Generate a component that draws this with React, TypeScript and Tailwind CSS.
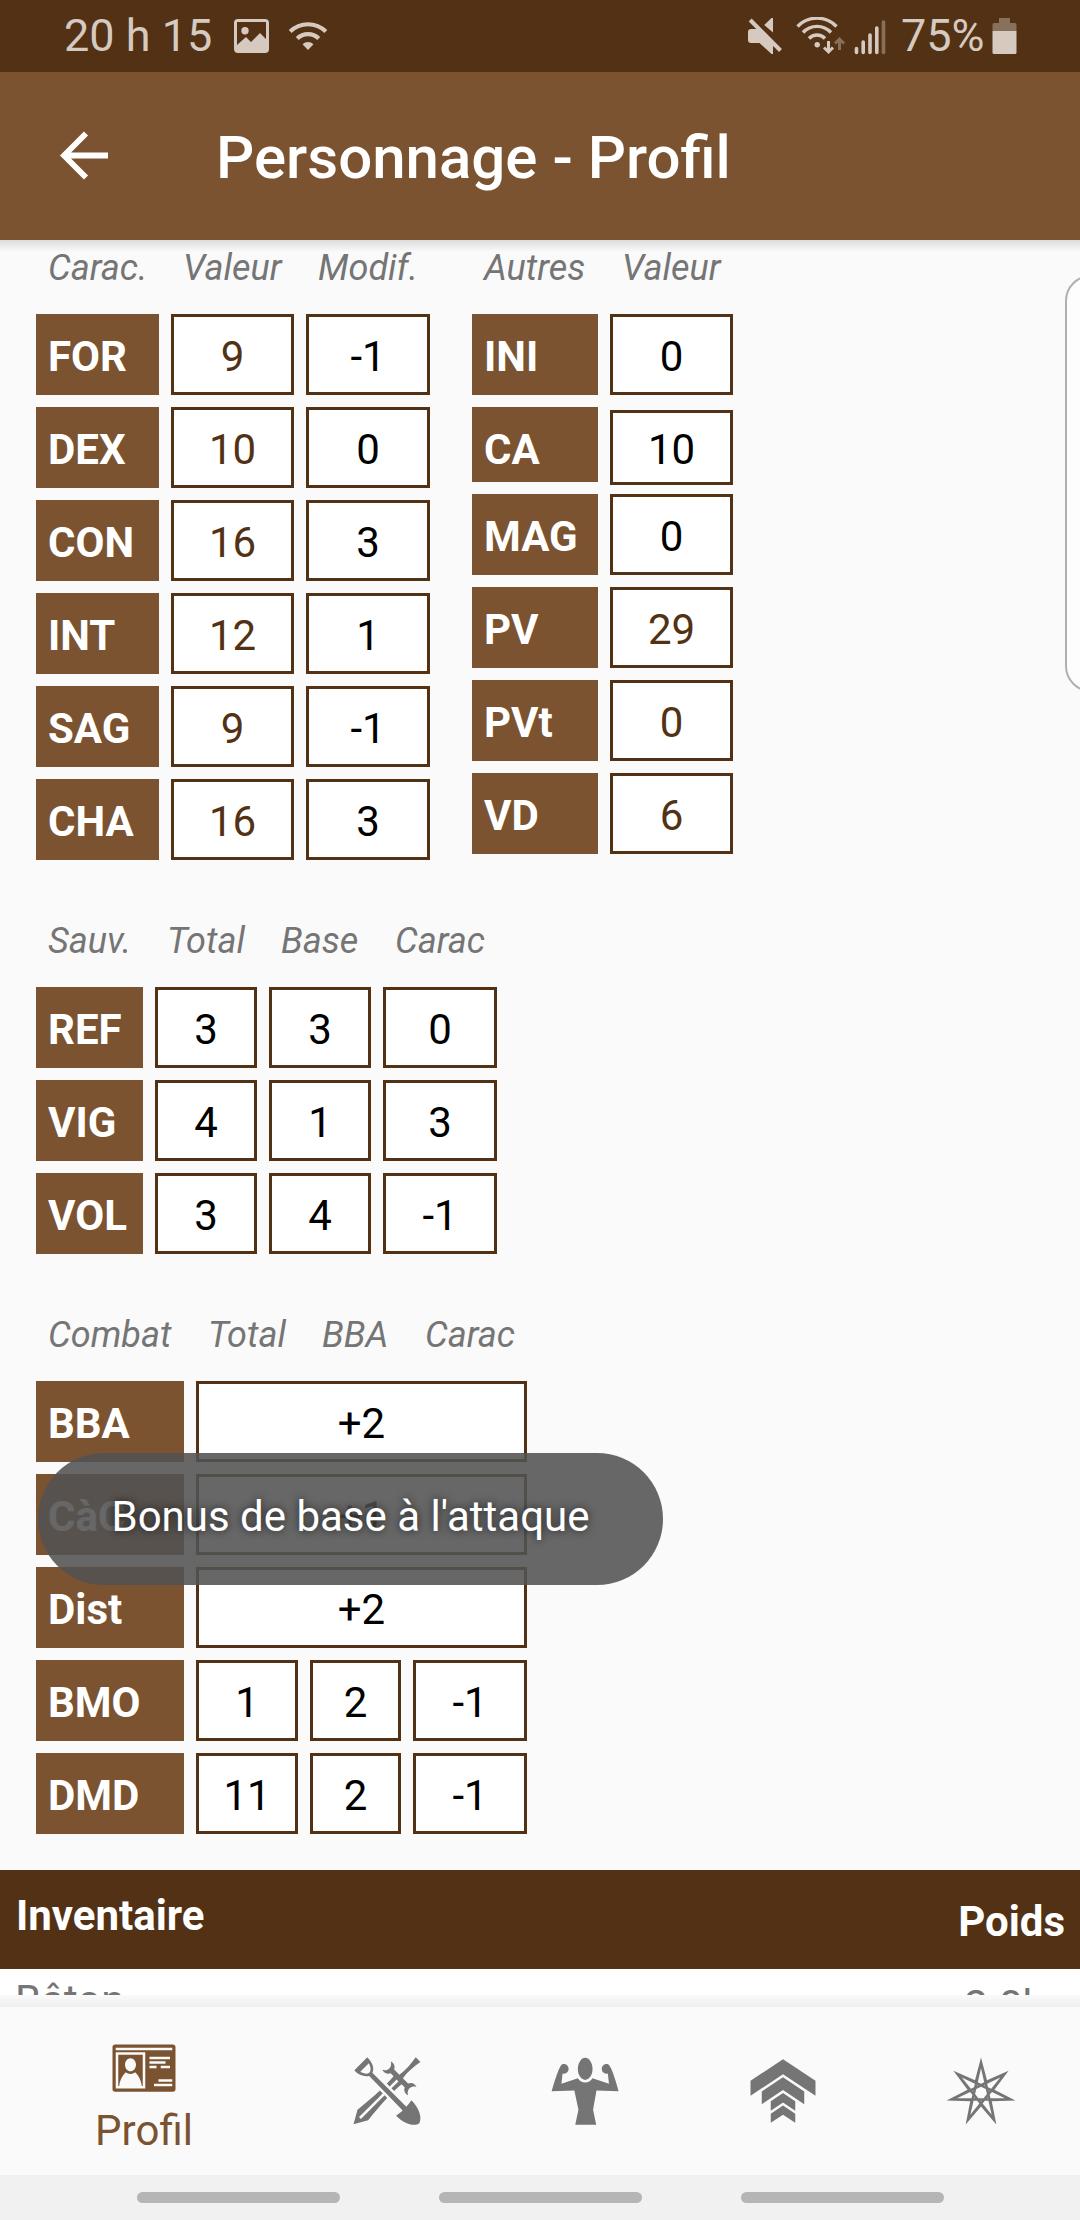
import { Fragment } from "react";
import type { ReactNode } from "react";
import { GiHeptagram, GiIdCard, GiStrong, GiSwordSpade, GiUpgrade } from "react-icons/gi";

function Label({ children, className = "h-[81px]" }: { children: ReactNode; className?: string }) {
  return (
    <div className={`bg-[#7b5330] pl-3 pt-[18px] text-[42px] leading-[49px] font-bold text-white ${className}`}>
      {children}
    </div>
  );
}

function Value({
  children,
  editable = false,
  className = "h-[81px] pt-[15px]",
}: {
  children: ReactNode;
  editable?: boolean;
  className?: string;
}) {
  return (
    <div
      className={`border-3 border-[#523114] bg-white text-center text-[42px] leading-[49px] ${
        editable ? "text-[#523114]" : "text-black"
      } ${className}`}
    >
      {children}
    </div>
  );
}

function Heads({ names, className }: { names: string[]; className: string }) {
  return (
    <div className={`grid gap-x-3 pt-[7px] text-[36px] leading-[42px] text-[#757575] italic ${className}`}>
      {names.map((name) => (
        <span key={name} className="pl-3 whitespace-nowrap">
          {name}
        </span>
      ))}
    </div>
  );
}

const abilities = [
  ["FOR", "9", "-1"],
  ["DEX", "10", "0"],
  ["CON", "16", "3"],
  ["INT", "12", "1"],
  ["SAG", "9", "-1"],
  ["CHA", "16", "3"],
];

const saves = [
  ["REF", "3", "3", "0"],
  ["VIG", "4", "1", "3"],
  ["VOL", "3", "4", "-1"],
];

const attacks = [
  ["BBA", "+2"],
  ["CàC", "+1"],
  ["Dist", "+2"],
];

const maneuvers = [
  ["BMO", "1", "2", "-1"],
  ["DMD", "11", "2", "-1"],
];

function StatusBar() {
  return (
    <div className="flex h-[72px] shrink-0 items-center justify-between bg-[#523114] pr-[63px] pl-[64px] text-[45px] text-[#d5c9c0]">
      <div className="flex items-center">
        <span className="w-[169px] leading-[72px] whitespace-nowrap">20 h 15</span>
        <svg width="37" height="36" viewBox="0 0 37 36" fill="currentColor">
          <path
            fillRule="evenodd"
            d="M5 1h27a4 4 0 0 1 4 4v26a4 4 0 0 1-4 4H5a4 4 0 0 1-4-4V5a4 4 0 0 1 4-4zm-1 3v23l9-8 5 5 9-9 6 6V4zm8 5a3.7 3.7 0 1 1 0 7.400a3.700 3.700 0 0 1 0-7.400z"
          />
        </svg>
        <svg className="ml-[18px]" width="40" height="36" viewBox="0 0 40 36" fill="none" stroke="currentColor" strokeWidth="4.200">
          <path d="M2.200 13.500a25.500 25.500 0 0 1 35.600 0" />
          <path d="M9.200 20.500a15.500 15.500 0 0 1 21.600 0" />
          <path d="M14.500 26.200a8 8 0 0 1 11 0L20 32z" fill="currentColor" stroke="none" />
        </svg>
      </div>
      <div className="flex items-center">
        <svg width="36" height="38" viewBox="0 0 36 38" fill="currentColor">
          <path d="M24.500 1h1.500v14.500L17.200 8z" />
          <path d="M4 12h8.500l13.500 14v11h-1.500L12.500 26H4q-3 0-3-3v-8q0-3 3-3z" />
          <path d="M3.200 3 33.500 33.500" stroke="currentColor" strokeWidth="4" />
        </svg>
        <svg className="ml-[13px]" width="50" height="38" viewBox="0 0 50 38" fill="none" stroke="currentColor" strokeWidth="3.400">
          <path d="M1.500 9.500a27 27 0 0 1 39 0" />
          <path d="M7 15.500a19 19 0 0 1 28 0" />
          <path d="M13 21.500a11 11 0 0 1 16 0" />
          <circle cx="21.200" cy="27.700" r="2.700" fill="currentColor" stroke="none" />
          <path d="M32.500 24v11M28 30.500l4.500 4.500 4.500-4.500" strokeWidth="3" />
          <path d="M43.500 33V22M39 26.500l4.500-4.500 4.500 4.500" strokeWidth="3" stroke="#88705b" />
        </svg>
        <svg className="ml-[8px]" width="33" height="38" viewBox="0 0 33 38" fill="none" stroke="currentColor" strokeWidth="3.600" strokeLinecap="round">
          <path d="M2.500 31.500v4M9.200 25v10.500M16 18v17.500M22.800 11v24.500" />
          <path d="M29.500 5v30.500" stroke="#88705b" />
        </svg>
        <span className="ml-[14px] w-[84px] leading-[72px] whitespace-nowrap">75%</span>
        <svg className="ml-[7px]" width="25" height="38" viewBox="0 0 25 38" fill="currentColor">
          <path d="M7 1h11v5h5q1.500 0 1.500 1.500V14H.5V7.500Q.5 6 2 6h5z" fill="#88705b" />
          <path d="M.5 14h24v21.500Q24.500 37 23 37H2Q.5 37 .5 35.500z" />
        </svg>
      </div>
    </div>
  );
}

export default function App() {
  return (
    <div className="relative flex h-[2220px] w-[1080px] flex-col overflow-hidden bg-[#fafafa] font-[Roboto,sans-serif]">
      <StatusBar />
      <header className="flex h-[168px] shrink-0 items-center bg-[#7b5330] text-white">
        <svg className="ml-[60px]" width="49" height="50" viewBox="0 0 49 50" fill="none" stroke="currentColor" strokeWidth="5.800">
          <path d="M48 24.500H4M26 2.500 4 24.500l22 22" />
        </svg>
        <h1 className="ml-[107px] pt-[4px] text-[60px] leading-[70px] font-medium whitespace-nowrap">Personnage - Profil</h1>
      </header>

      <main className="relative h-[1755px] shrink-0 overflow-hidden">
        <div className="absolute inset-x-0 top-0 h-3 bg-linear-to-b from-black/12 to-transparent" />
        <div className="flex pl-9">
          <section className="w-[394px]">
            <Heads names={["Carac.", "Valeur", "Modif."]} className="h-[74px] grid-cols-[123px_123px_124px]" />
            <div className="grid grid-cols-[123px_123px_124px] gap-3">
              {abilities.map(([name, score, mod]) => (
                <Fragment key={name}>
                  <Label>{name}</Label>
                  <Value editable>{score}</Value>
                  <Value>{mod}</Value>
                </Fragment>
              ))}
            </div>
          </section>
          <section className="ml-[42px]">
            <Heads names={["Autres", "Valeur"]} className="h-[74px] grid-cols-[126px_123px]" />
            <div className="grid grid-cols-[126px_123px] gap-x-3">
              <div className="flex flex-col gap-3">
                <Label>INI</Label>
                <Label className="h-[75px]">CA</Label>
                <Label>MAG</Label>
                <Label>PV</Label>
                <Label>PVt</Label>
                <Label>VD</Label>
              </div>
              <div className="flex flex-col gap-3">
                <Value>0</Value>
                <Value className="mt-[3px] -mb-[3px] h-[75px] pt-[12px]">10</Value>
                <Value>0</Value>
                <Value editable>29</Value>
                <Value editable>0</Value>
                <Value editable>6</Value>
              </div>
            </div>
          </section>
        </div>

        <section className="mt-[53px] pl-9">
          <Heads names={["Sauv.", "Total", "Base", "Carac"]} className="h-[74px] grid-cols-[107px_102px_102px_114px]" />
          <div className="grid grid-cols-[107px_102px_102px_114px] gap-3">
            {saves.map(([name, total, base, ability]) => (
              <Fragment key={name}>
                <Label>{name}</Label>
                <Value>{total}</Value>
                <Value>{base}</Value>
                <Value>{ability}</Value>
              </Fragment>
            ))}
          </div>
        </section>

        <section className="mt-[53px] pl-9">
          <Heads names={["Combat", "Total", "BBA", "Carac"]} className="h-[74px] grid-cols-[148px_102px_91px_114px]" />
          <div className="grid grid-cols-[148px_102px_91px_114px] gap-3">
            {attacks.map(([name, total]) => (
              <Fragment key={name}>
                <Label>{name}</Label>
                <Value className="col-span-3 h-[81px] pt-[15px]">{total}</Value>
              </Fragment>
            ))}
            {maneuvers.map(([name, total, base, ability]) => (
              <Fragment key={name}>
                <Label>{name}</Label>
                <Value>{total}</Value>
                <Value>{base}</Value>
                <Value>{ability}</Value>
              </Fragment>
            ))}
          </div>
        </section>

        <section className="mt-9">
          <div className="flex h-[99px] justify-between bg-[#523114] pr-[15px] pl-[16px] text-[42px] leading-[49px] font-bold text-white">
            <span className="pt-[21px]">Inventaire</span>
            <span className="pt-[27px]">Poids</span>
          </div>
          <div className="flex h-[60px] justify-between bg-white pr-[13px] pl-[15px] text-[42px] leading-[49px] text-[#757575]">
            <span className="pt-[7px]">Bâton</span>
            <span className="pt-[12px]">2.0kg</span>
          </div>
        </section>

        <div className="absolute top-[35px] left-[1065px] h-[417px] w-[60px] rounded-[26px] border-2 border-[#b0b0b0] bg-[#fdfdfd]" />
      </main>

      <div className="h-3 shrink-0 bg-linear-to-b from-[#fafafa] to-[#efefef]" />
      <nav className="grid h-[168px] shrink-0 grid-cols-[288px_198px_198px_198px_198px] place-items-center bg-[#fafafa] text-[72px] text-[#757575]">
        <div className="flex h-full flex-col items-center pt-[24px] text-[#7b5330]">
          <GiIdCard />
          <span className="mt-[3px] text-[42px] leading-[49px]">Profil</span>
        </div>
        <GiSwordSpade />
        <GiStrong />
        <GiUpgrade />
        <GiHeptagram />
      </nav>
      <div className="flex h-[45px] shrink-0 justify-center gap-[99px] bg-[#f1f1f1] pt-[17px]">
        <div className="h-[11px] w-[203px] rounded-full bg-[#b5b5b5]" />
        <div className="h-[11px] w-[203px] rounded-full bg-[#b5b5b5]" />
        <div className="h-[11px] w-[203px] rounded-full bg-[#b5b5b5]" />
      </div>

      <div className="absolute top-[1453px] left-[38px] flex h-[132px] w-[625px] justify-center rounded-full bg-[#525252]/88 pt-[39px] text-[42px] leading-[49px] whitespace-nowrap text-white [text-shadow:0_0_8px_rgba(0,0,0,0.7)]">
        Bonus de base à l'attaque
      </div>
    </div>
  );
}
